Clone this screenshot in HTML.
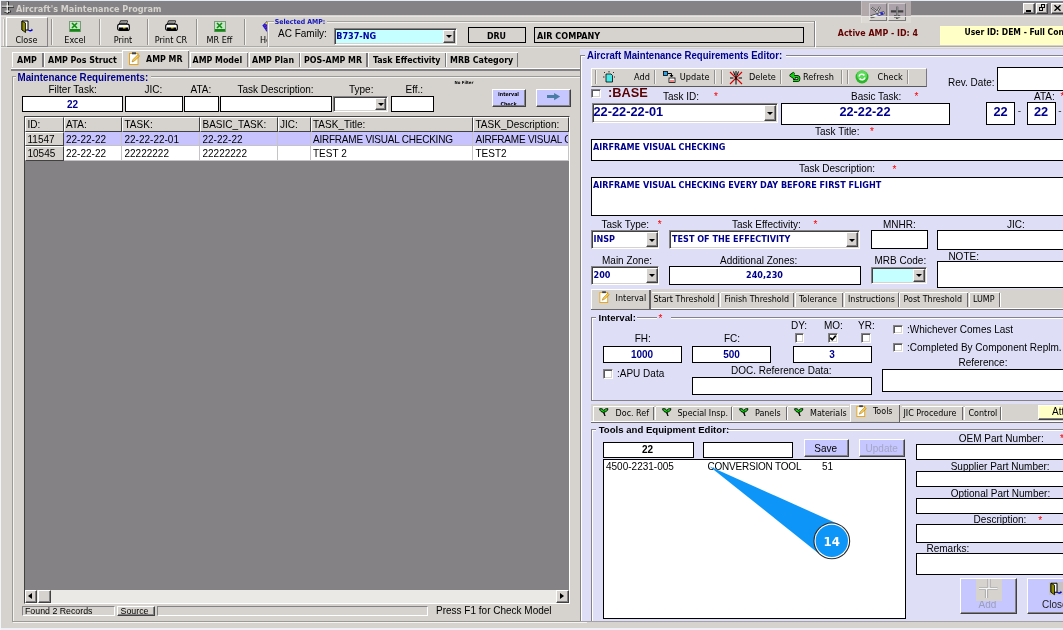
<!DOCTYPE html>
<html><head><meta charset="utf-8"><title>Aircraft's Maintenance Program</title>
<style>
html,body{margin:0;padding:0;}
body{width:1063px;height:630px;overflow:hidden;position:relative;background:#D6D3CE;font-family:"Liberation Sans",Arial,sans-serif;font-size:10px;}
.b{position:absolute;}
.t{position:absolute;white-space:nowrap;overflow:visible;}
#w{position:absolute;left:0;top:0;width:1063px;height:630px;overflow:hidden;will-change:transform;}
svg{display:block;overflow:visible}
.fa{font-family:"Liberation Sans",Arial,sans-serif}
.ft{font-family:"DejaVu Sans Condensed","DejaVu Sans","Liberation Sans",sans-serif}
</style></head><body><div id="w">
<div class="b " style="left:0px;top:0px;width:1063px;height:1.2px;background:#E3EBF7"></div>
<div class="b " style="left:0px;top:0px;width:1px;height:630px;background:#F3F5FB"></div>
<div class="b " style="left:1px;top:1.2px;width:1062px;height:14.3px;background:#848284"></div>
<svg class="b" style="left:1px;top:0.700px" width="14" height="13" viewBox="0 0 14 13"><path d="M6.600 0.500v12M1 5.500h12M3.300 10.500h6.400" stroke="#000" stroke-width="2.200" fill="none"/><path d="M6.200 0.700v11.200M0.800 5h11.800M3.300 10h5.800" stroke="#fff" stroke-width="1.250" fill="none"/></svg>
<div class="t ft" style="top:2.79px;font-size:9px;line-height:12px;height:12px;color:#D6D3CE;font-weight:bold;left:16px;">Aircraft&#x27;s Maintenance Program</div>
<div class="b " style="left:861.2px;top:1.2px;width:50.3px;height:14.8px;background:#B2A9AA"></div>
<div class="b " style="left:861.2px;top:16px;width:50.3px;height:6.7px;background:#DDDAD6"></div>
<div class="b " style="left:861.2px;top:1.2px;width:1.3px;height:21.5px;background:rgba(255,255,255,.25)"></div>
<div class="b " style="left:869px;top:2.8px;width:18.3px;height:13.2px;background:#ABA3A9"></div>
<div class="b " style="left:869px;top:16px;width:18.3px;height:5.1px;background:#D8D5D0"></div>
<div class="b " style="left:869px;top:2.8px;width:18.3px;height:18.3px;box-sizing:border-box;border:1px solid;border-color:rgba(255,255,255,.45) #7B797B #7B797B rgba(255,255,255,.45)"></div>
<div class="b " style="left:887.9px;top:2.8px;width:18.6px;height:13.2px;background:#ABA3A9"></div>
<div class="b " style="left:887.9px;top:16px;width:18.6px;height:5.1px;background:#D8D5D0"></div>
<div class="b " style="left:887.9px;top:2.8px;width:18.6px;height:18.3px;box-sizing:border-box;border:1px solid;border-color:rgba(255,255,255,.45) #7B797B #7B797B rgba(255,255,255,.45)"></div>
<svg class="b" style="left:870px;top:5px" width="16" height="14" viewBox="0 0 16 14"><path d="M1.500 2.500L8 7.500M10 2L6.500 8" stroke="#424142" stroke-width="2.200" fill="none"/><path d="M1.500 2.500L8 7.500M10 2L6.500 8" stroke="#E7E7E7" stroke-width="0.900" fill="none"/><path d="M2 11.500L13 8" stroke="#424142" stroke-width="3.400" stroke-linecap="round"/><path d="M2 11.500L13 8" stroke="#EFEFEF" stroke-width="1.800" stroke-linecap="round"/><circle cx="11.800" cy="8.600" r="1.500" fill="#2424E0"/><path d="M6 9l3 1" stroke="#5A5ADF" stroke-width="1"/></svg>
<svg class="b" style="left:889.5px;top:5.5px" width="14" height="14" viewBox="0 0 14 14"><path d="M7.100 0.700v12.300M0.900 5.400h12.400M4 10.300h6.200" stroke="#424142" stroke-width="2.200" fill="none"/><path d="M7.100 1v11.500" stroke="#EFEFEF" stroke-width="0.700" fill="none"/></svg>
<div class="b " style="left:1023px;top:2.5px;width:12px;height:11.0px;background:#D6D3CE;box-sizing:border-box;border:1px solid;border-color:#fff #424142 #424142 #fff;box-shadow:inset -1px -1px 0 #848284;"></div>
<div class="b " style="left:1036px;top:2.5px;width:12.4px;height:11.0px;background:#D6D3CE;box-sizing:border-box;border:1px solid;border-color:#fff #424142 #424142 #fff;box-shadow:inset -1px -1px 0 #848284;"></div>
<div class="b " style="left:1051px;top:2.5px;width:15px;height:11.0px;background:#D6D3CE;box-sizing:border-box;border:1px solid;border-color:#fff #424142 #424142 #fff;box-shadow:inset -1px -1px 0 #848284;"></div>
<div class="b" style="left:1026.2px;top:9.9px;width:4.8px;height:1.7px;background:#000"></div>
<div class="b" style="left:1040.8px;top:4.3px;width:4.2px;height:4.2px;border:1px solid #000;border-top-width:1.7px;box-sizing:border-box"></div>
<div class="b" style="left:1038.5px;top:7.1px;width:4.5px;height:4.4px;border:1px solid #000;border-top-width:1.7px;box-sizing:border-box;background:#D6D3CE"></div>
<svg class="b" style="left:1054px;top:5px" width="7" height="6" viewBox="0 0 7 6"><path d="M0.500 0.300l6 5.400M6.500 0.300l-6 5.400" stroke="#000" stroke-width="1.500"/></svg>
<div class="b " style="left:1px;top:15.5px;width:1062px;height:1.5px;background:#E7E5E1"></div>
<div class="b " style="left:1px;top:46.3px;width:1062px;height:1.0px;background:#ADABA8"></div>
<div class="b " style="left:1px;top:47.3px;width:1062px;height:1.0px;background:#E9E7E4"></div>
<div class="b " style="left:2.5px;top:18.5px;width:1.2px;height:27.0px;background:#F3F2F0"></div>
<div class="b " style="left:3.7px;top:18.5px;width:1.0px;height:27.0px;background:#B5B3B0"></div>
<div class="b " style="left:6px;top:17px;width:42px;height:29.5px;box-sizing:border-box;border:1px solid;border-color:#fff #848284 #848284 #fff"></div>
<div class="b " style="left:51px;top:19px;width:1px;height:26px;background:#94928F"></div>
<div class="b " style="left:52px;top:19px;width:1px;height:26px;background:#F3F2F0"></div>
<div class="b " style="left:99px;top:19px;width:1px;height:26px;background:#94928F"></div>
<div class="b " style="left:100px;top:19px;width:1px;height:26px;background:#F3F2F0"></div>
<div class="b " style="left:147px;top:19px;width:1px;height:26px;background:#94928F"></div>
<div class="b " style="left:148px;top:19px;width:1px;height:26px;background:#F3F2F0"></div>
<div class="b " style="left:196px;top:19px;width:1px;height:26px;background:#94928F"></div>
<div class="b " style="left:197px;top:19px;width:1px;height:26px;background:#F3F2F0"></div>
<div class="b " style="left:244px;top:19px;width:1px;height:26px;background:#94928F"></div>
<div class="b " style="left:245px;top:19px;width:1px;height:26px;background:#F3F2F0"></div>
<div class="t ft" style="top:33.79px;font-size:9px;line-height:12px;height:12px;color:#000;left:-3.5px;width:60px;text-align:center;">Close</div>
<div class="t ft" style="top:33.79px;font-size:9px;line-height:12px;height:12px;color:#000;left:45.0px;width:60px;text-align:center;">Excel</div>
<div class="t ft" style="top:33.79px;font-size:9px;line-height:12px;height:12px;color:#000;left:93.0px;width:60px;text-align:center;">Print</div>
<div class="t ft" style="top:33.79px;font-size:9px;line-height:12px;height:12px;color:#000;left:141.0px;width:60px;text-align:center;">Print CR</div>
<div class="t ft" style="top:33.79px;font-size:9px;line-height:12px;height:12px;color:#000;left:189.5px;width:60px;text-align:center;">MR Eff</div>
<svg class="b" style="left:21px;top:20px" width="13" height="13" viewBox="0 0 13 13"><path d="M1 1h6v9h-6z" fill="#fff" stroke="#000" stroke-width="1"/><path d="M1 1l3.5 2v9.5l-3.5-2.5z" fill="#8C8A00" stroke="#000" stroke-width="0.8"/><path d="M7 10.5c2 1.5 4 1 5-0.5l-1.5-1.5v1c-1 .8-2 .8-3.5 0z" fill="#0000C6"/></svg>
<svg class="b" style="left:69px;top:20.5px" width="12" height="11" viewBox="0 0 12 11"><rect x="0.5" y="0.5" width="11" height="10" fill="#C6E7C6" stroke="#7B9A7B"/><rect x="1" y="8" width="10" height="2.5" fill="#108A10"/><path d="M3 2l5 5M8 2l-5 5" stroke="#108A10" stroke-width="1.6"/></svg>
<svg class="b" style="left:213.5px;top:20.5px" width="12" height="11" viewBox="0 0 12 11"><rect x="0.5" y="0.5" width="11" height="10" fill="#C6E7C6" stroke="#7B9A7B"/><rect x="1" y="8" width="10" height="2.5" fill="#108A10"/><path d="M3 2l5 5M8 2l-5 5" stroke="#108A10" stroke-width="1.6"/></svg>
<svg class="b" style="left:116.5px;top:20px" width="13" height="12" viewBox="0 0 13 12"><path d="M3.5 0.8h7l-1 3.2h-7z" fill="#fff" stroke="#000" stroke-width="0.9"/><path d="M4 2h5M3.7 3h5" stroke="#000" stroke-width="0.5"/><rect x="0.7" y="4.2" width="11.6" height="6.3" rx="2" fill="#fff" stroke="#000" stroke-width="1.2"/><rect x="2" y="7.5" width="9" height="2.6" fill="#000"/><rect x="6" y="7.2" width="2.5" height="1.2" fill="#FFE700"/></svg>
<svg class="b" style="left:164.5px;top:20px" width="13" height="12" viewBox="0 0 13 12"><path d="M3.5 0.8h7l-1 3.2h-7z" fill="#fff" stroke="#000" stroke-width="0.9"/><path d="M4 2h5M3.7 3h5" stroke="#000" stroke-width="0.5"/><rect x="0.7" y="4.2" width="11.6" height="6.3" rx="2" fill="#fff" stroke="#000" stroke-width="1.2"/><rect x="2" y="7.5" width="9" height="2.6" fill="#000"/><rect x="6" y="7.2" width="2.5" height="1.2" fill="#FFE700"/></svg>
<div class="b" style="left:258px;top:30px;width:9px;height:16px;overflow:hidden">
<div class="t ft" style="top:3.79px;font-size:9px;line-height:12px;height:12px;color:#000;left:2px;">Help</div>
</div>
<svg class="b" style="left:262px;top:21px" width="5" height="11" viewBox="0 0 5 11"><path d="M5 0L0.300 4.500 5 11z" fill="#1818D6"/><path d="M5 3L1.800 5.200M5 5.500L2.500 7M5 8L3.500 9" stroke="#8C30C6" stroke-width="0.900"/><circle cx="4.300" cy="2.300" r="1" fill="#FFEF00"/></svg>
<div class="b " style="left:267px;top:21px;width:1px;height:26px;background:#A5A2A0"></div>
<div class="b " style="left:268px;top:21.5px;width:1px;height:25.5px;background:#F5F4F2"></div>
<div class="b " style="left:267px;top:20.5px;width:7px;height:1.0px;background:#A5A3A0"></div>
<div class="b " style="left:268px;top:21.5px;width:6px;height:1.0px;background:#F1F0EE"></div>
<div class="b " style="left:327px;top:20.5px;width:488px;height:1.0px;background:#A5A3A0"></div>
<div class="b " style="left:327px;top:21.5px;width:487px;height:1.0px;background:#F1F0EE"></div>
<div class="b " style="left:814px;top:21px;width:1px;height:26px;background:#848284"></div>
<div class="b " style="left:815px;top:21px;width:1px;height:27px;background:#fff"></div>
<div class="t ft" style="top:16.91px;font-size:6.9px;line-height:10px;height:10px;color:#1414B8;font-weight:bold;left:274.8px;">Selected AMP:</div>
<div class="t fa" style="top:27.04px;font-size:10px;line-height:13px;height:13px;color:#000;transform:scaleY(1.07);transform-origin:0 9.96px;left:278px;">AC Family:</div>
<div class="b " style="left:334px;top:27.5px;width:123px;height:17.5px;background:#C6FFFF;box-sizing:border-box;border:1px solid;border-color:#848284 #fff #fff #848284;box-shadow:inset 1px 1px 0 #424142, inset -1px -1px 0 #D6D3CE;"></div>
<div class="b " style="left:443px;top:29.5px;width:12px;height:13.5px;background:#D6D3CE;box-sizing:border-box;border:1px solid;border-color:#fff #424142 #424142 #fff;box-shadow:inset -1px -1px 0 #848284;"></div>
<div class="b" style="left:446.0px;top:35.25px;width:0;height:0;border-left:3px solid transparent;border-right:3px solid transparent;border-top:3px solid #000"></div>
<div class="t ft" style="top:30.29px;font-size:9px;line-height:12px;height:12px;color:#0000A5;font-weight:bold;left:336.3px;">B737-NG</div>
<div class="b " style="left:468px;top:27px;width:58px;height:16px;background:#D6D3CE;border:1px solid #000;box-sizing:border-box;"></div>
<div class="t ft" style="top:29.66px;font-size:8.8px;line-height:12px;height:12px;color:#000;font-weight:bold;left:471.5px;width:50px;text-align:center;">DRU</div>
<div class="b " style="left:534px;top:27px;width:270px;height:16px;background:#D6D3CE;border:1px solid #000;box-sizing:border-box;"></div>
<div class="t ft" style="top:29.89px;font-size:9px;line-height:12px;height:12px;color:#000;font-weight:bold;left:537px;">AIR COMPANY</div>
<div class="t ft" style="top:26.56px;font-size:8.8px;line-height:12px;height:12px;color:#630000;font-weight:bold;left:837.8px;">Active AMP - ID: 4</div>
<div class="b " style="left:940.2px;top:26.3px;width:122.8px;height:18.4px;background:#FFFFC6"></div>
<div class="t ft" style="top:26.36px;font-size:8.5px;line-height:12px;height:12px;color:#000;font-weight:bold;left:964.5px;">User ID: DEM - Full Control</div>
<div class="t ft" style="top:53.96px;font-size:8.8px;line-height:12px;height:12px;color:#000;font-weight:bold;left:17px;">AMP</div>
<div class="t ft" style="top:53.96px;font-size:8.8px;line-height:12px;height:12px;color:#000;font-weight:bold;left:48px;">AMP Pos Struct</div>
<div class="t ft" style="top:53.96px;font-size:8.8px;line-height:12px;height:12px;color:#000;font-weight:bold;left:192.5px;">AMP Model</div>
<div class="t ft" style="top:53.96px;font-size:8.8px;line-height:12px;height:12px;color:#000;font-weight:bold;left:252px;">AMP Plan</div>
<div class="t ft" style="top:53.96px;font-size:8.8px;line-height:12px;height:12px;color:#000;font-weight:bold;left:304px;">POS-AMP MR</div>
<div class="t ft" style="top:53.96px;font-size:8.8px;line-height:12px;height:12px;color:#000;font-weight:bold;left:373px;">Task Effectivity</div>
<div class="t ft" style="top:53.96px;font-size:8.8px;line-height:12px;height:12px;color:#000;font-weight:bold;left:450px;">MRB Category</div>
<div class="b " style="left:12px;top:52px;width:31.6px;height:1px;background:#fff"></div>
<div class="b " style="left:12px;top:52px;width:1px;height:15px;background:#fff"></div>
<div class="b " style="left:42.300000000000004px;top:53px;width:1.3px;height:14px;background:#7B797B"></div>
<div class="b " style="left:43.8px;top:52px;width:78.2px;height:1px;background:#fff"></div>
<div class="b " style="left:43.8px;top:52px;width:1.0px;height:15px;background:#fff"></div>
<div class="b " style="left:190px;top:52px;width:58.3px;height:1px;background:#fff"></div>
<div class="b " style="left:190px;top:52px;width:1px;height:15px;background:#fff"></div>
<div class="b " style="left:247.0px;top:53px;width:1.3px;height:14px;background:#7B797B"></div>
<div class="b " style="left:248.5px;top:52px;width:51.3px;height:1px;background:#fff"></div>
<div class="b " style="left:248.5px;top:52px;width:1.0px;height:15px;background:#fff"></div>
<div class="b " style="left:298.5px;top:53px;width:1.3px;height:14px;background:#7B797B"></div>
<div class="b " style="left:300px;top:52px;width:67.6px;height:1px;background:#fff"></div>
<div class="b " style="left:300px;top:52px;width:1px;height:15px;background:#fff"></div>
<div class="b " style="left:366.3px;top:53px;width:1.3px;height:14px;background:#7B797B"></div>
<div class="b " style="left:367.8px;top:52px;width:78.2px;height:1px;background:#fff"></div>
<div class="b " style="left:367.8px;top:52px;width:1.0px;height:15px;background:#fff"></div>
<div class="b " style="left:444.7px;top:53px;width:1.3px;height:14px;background:#7B797B"></div>
<div class="b " style="left:446.2px;top:52px;width:72.2px;height:1px;background:#fff"></div>
<div class="b " style="left:446.2px;top:52px;width:1.0px;height:15px;background:#fff"></div>
<div class="b " style="left:517.1px;top:53px;width:1.3px;height:14px;background:#7B797B"></div>
<div class="b " style="left:11px;top:68px;width:569px;height:1px;background:#fff"></div>
<div class="b " style="left:11px;top:69.4px;width:569px;height:1.3px;background:#848284"></div>
<div class="b " style="left:1px;top:628px;width:1062px;height:2px;background:#EFEFF7"></div>
<div class="b " style="left:123px;top:50px;width:66px;height:19px;background:#D6D3CE"></div>
<div class="b " style="left:122px;top:50.3px;width:67.3px;height:1.0px;background:#fff"></div>
<div class="b " style="left:122px;top:50.3px;width:1px;height:17.7px;background:#fff"></div>
<div class="b " style="left:188.0px;top:51.3px;width:1.3px;height:16.7px;background:#7B797B"></div>
<svg class="b" style="left:129px;top:52px" width="11" height="13" viewBox="0 0 11 13"><rect x="0.5" y="1.5" width="8.5" height="11" fill="#fff" stroke="#E7A218" stroke-width="1"/><rect x="3" y="0.3" width="4" height="2" fill="#424142"/><path d="M3 10l1-2.5 5-5 1.5 1.5-5 5z" fill="#F7CB4A" stroke="#9C6500" stroke-width="0.5"/></svg>
<div class="t ft" style="top:52.76px;font-size:8.8px;line-height:12px;height:12px;color:#000;font-weight:bold;left:146px;">AMP MR</div>
<div class="b " style="left:12px;top:76px;width:574px;height:545.8px;box-sizing:border-box;border:1px solid #9C9A97;box-shadow:inset 1px 1px 0 #F5F4F2, 1px 1px 0 #F5F4F2;"></div>
<div class="b " style="left:15.5px;top:75px;width:135.0px;height:4px;background:#D6D3CE"></div>
<div class="t fa" style="top:70.60px;font-size:9.8px;line-height:13px;height:13px;color:#00008C;transform:scaleY(1.07);transform-origin:0 9.90px;font-weight:bold;left:17.5px;">Maintenance Requirements:</div>
<div class="t fa" style="top:83.03px;font-size:10px;line-height:13px;height:13px;color:#000;transform:scaleY(1.07);transform-origin:0 9.96px;left:48.5px;">Filter Task:</div>
<div class="t fa" style="top:83.03px;font-size:10px;line-height:13px;height:13px;color:#000;transform:scaleY(1.07);transform-origin:0 9.96px;left:144.5px;">JIC:</div>
<div class="t fa" style="top:83.03px;font-size:10px;line-height:13px;height:13px;color:#000;transform:scaleY(1.07);transform-origin:0 9.96px;left:190.5px;">ATA:</div>
<div class="t fa" style="top:83.03px;font-size:10px;line-height:13px;height:13px;color:#000;transform:scaleY(1.07);transform-origin:0 9.96px;left:237.5px;">Task Description:</div>
<div class="t fa" style="top:83.03px;font-size:10px;line-height:13px;height:13px;color:#000;transform:scaleY(1.07);transform-origin:0 9.96px;left:349px;">Type:</div>
<div class="t fa" style="top:83.03px;font-size:10px;line-height:13px;height:13px;color:#000;transform:scaleY(1.07);transform-origin:0 9.96px;left:405.5px;">Eff.:</div>
<div class="b " style="left:22px;top:96.2px;width:101px;height:16.0px;background:#fff;border:1px solid #000;box-sizing:border-box;"></div>
<div class="t fa" style="top:98.23px;font-size:10px;line-height:13px;height:13px;color:#00008C;transform:scaleY(1.07);transform-origin:50% 9.96px;font-weight:bold;left:52.5px;width:40px;text-align:center;">22</div>
<div class="b " style="left:125px;top:96.2px;width:58px;height:16.0px;background:#fff;border:1px solid #000;box-sizing:border-box;"></div>
<div class="b " style="left:184px;top:96.2px;width:35px;height:16.0px;background:#fff;border:1px solid #000;box-sizing:border-box;"></div>
<div class="b " style="left:220px;top:96.2px;width:112px;height:16.0px;background:#fff;border:1px solid #000;box-sizing:border-box;"></div>
<div class="b " style="left:333px;top:96.2px;width:55.3px;height:16.0px;background:#fff;box-sizing:border-box;border:1px solid;border-color:#848284 #fff #fff #848284;box-shadow:inset 1px 1px 0 #424142, inset -1px -1px 0 #D6D3CE;"></div>
<div class="b " style="left:374.8px;top:98.2px;width:11.5px;height:12.0px;background:#D6D3CE;box-sizing:border-box;border:1px solid;border-color:#fff #424142 #424142 #fff;box-shadow:inset -1px -1px 0 #848284;"></div>
<div class="b" style="left:377.55px;top:103.2px;width:0;height:0;border-left:3px solid transparent;border-right:3px solid transparent;border-top:3px solid #000"></div>
<div class="b " style="left:391px;top:96.2px;width:43px;height:16.0px;background:#fff;border:1px solid #000;box-sizing:border-box;"></div>
<div class="t ft" style="top:79.31px;font-size:4.3px;line-height:7px;height:7px;color:#000;font-weight:bold;left:454.5px;">No Filter</div>
<div class="b " style="left:491.5px;top:88.5px;width:34.2px;height:18.5px;background:#C6C7FF;box-sizing:border-box;border:1px solid;border-color:#fff #424142 #424142 #fff;box-shadow:inset -1px -1px 0 #848284;"></div>
<div class="b " style="left:536px;top:88.5px;width:34.5px;height:18.5px;background:#C6C7FF;box-sizing:border-box;border:1px solid;border-color:#fff #424142 #424142 #fff;box-shadow:inset -1px -1px 0 #848284;"></div>
<div class="t ft" style="top:89.77px;font-size:5.3px;line-height:8px;height:8px;color:#000;font-weight:bold;left:488.5px;width:40px;text-align:center;">Interval</div>
<div class="t ft" style="top:99.97px;font-size:5.3px;line-height:8px;height:8px;color:#000;font-weight:bold;left:488.5px;width:40px;text-align:center;clip-path:inset(0 0 2.6px 0);">Check</div>
<svg class="b" style="left:546.5px;top:92.5px" width="13.2" height="7.2" viewBox="0 0 13 7"><path d="M0 2h7V0L13 3.5 7 7V5H0z" fill="#4A7DA5"/></svg>
<div class="b " style="left:24px;top:116px;width:546px;height:488px;background:#848284;border:1px solid;border-color:#424142 #fff #fff #424142;box-sizing:border-box"></div>
<div class="b " style="left:25px;top:117px;width:38.5px;height:14.5px;background:#D6D3CE;box-sizing:border-box;border:1px solid;border-color:#fff #424142 #424142 #fff;overflow:hidden"></div>
<div class="t fa" style="top:117.53px;font-size:10px;line-height:13px;height:13px;color:#000;transform:scaleY(1.07);transform-origin:0 9.96px;left:27.5px;">ID:</div>
<div class="b " style="left:63.5px;top:117px;width:58.5px;height:14.5px;background:#D6D3CE;box-sizing:border-box;border:1px solid;border-color:#fff #424142 #424142 #fff;overflow:hidden"></div>
<div class="t fa" style="top:117.53px;font-size:10px;line-height:13px;height:13px;color:#000;transform:scaleY(1.07);transform-origin:0 9.96px;left:66.0px;">ATA:</div>
<div class="b " style="left:122px;top:117px;width:78px;height:14.5px;background:#D6D3CE;box-sizing:border-box;border:1px solid;border-color:#fff #424142 #424142 #fff;overflow:hidden"></div>
<div class="t fa" style="top:117.53px;font-size:10px;line-height:13px;height:13px;color:#000;transform:scaleY(1.07);transform-origin:0 9.96px;left:124.5px;">TASK:</div>
<div class="b " style="left:200px;top:117px;width:77.5px;height:14.5px;background:#D6D3CE;box-sizing:border-box;border:1px solid;border-color:#fff #424142 #424142 #fff;overflow:hidden"></div>
<div class="t fa" style="top:117.53px;font-size:10px;line-height:13px;height:13px;color:#000;transform:scaleY(1.07);transform-origin:0 9.96px;left:202.5px;">BASIC_TASK:</div>
<div class="b " style="left:277.5px;top:117px;width:33.0px;height:14.5px;background:#D6D3CE;box-sizing:border-box;border:1px solid;border-color:#fff #424142 #424142 #fff;overflow:hidden"></div>
<div class="t fa" style="top:117.53px;font-size:10px;line-height:13px;height:13px;color:#000;transform:scaleY(1.07);transform-origin:0 9.96px;left:280.0px;">JIC:</div>
<div class="b " style="left:310.5px;top:117px;width:162.5px;height:14.5px;background:#D6D3CE;box-sizing:border-box;border:1px solid;border-color:#fff #424142 #424142 #fff;overflow:hidden"></div>
<div class="t fa" style="top:117.53px;font-size:10px;line-height:13px;height:13px;color:#000;transform:scaleY(1.07);transform-origin:0 9.96px;left:313.0px;">TASK_Title:</div>
<div class="b " style="left:473px;top:117px;width:96px;height:14.5px;background:#D6D3CE;box-sizing:border-box;border:1px solid;border-color:#fff #424142 #424142 #fff;overflow:hidden"></div>
<div class="t fa" style="top:117.53px;font-size:10px;line-height:13px;height:13px;color:#000;transform:scaleY(1.07);transform-origin:0 9.96px;left:475.5px;">TASK_Description:</div>
<div class="b " style="left:25px;top:131.5px;width:38.5px;height:14.5px;background:#D6D3CE;box-sizing:border-box;border:1px solid;border-color:#fff #424142 #424142 #fff;"></div>
<div class="b" style="left:25px;top:131.5px;width:37.5px;height:14.5px;overflow:hidden">
<div class="t fa" style="top:1.04px;font-size:10px;line-height:13px;height:13px;color:#000;transform:scaleY(1.07);transform-origin:0 9.96px;left:2.5px;">11547</div>
</div>
<div class="b " style="left:63.5px;top:131.5px;width:58.5px;height:14.5px;background:#C6C3FF;box-sizing:border-box;border-right:1px solid #C6C3C6;border-bottom:1px solid #C6C3C6;overflow:hidden"></div>
<div class="b" style="left:63.5px;top:131.5px;width:57.5px;height:14.5px;overflow:hidden">
<div class="t fa" style="top:1.04px;font-size:10px;line-height:13px;height:13px;color:#000;transform:scaleY(1.07);transform-origin:0 9.96px;left:2.5px;">22-22-22</div>
</div>
<div class="b " style="left:122px;top:131.5px;width:78px;height:14.5px;background:#C6C3FF;box-sizing:border-box;border-right:1px solid #C6C3C6;border-bottom:1px solid #C6C3C6;overflow:hidden"></div>
<div class="b" style="left:122px;top:131.5px;width:77px;height:14.5px;overflow:hidden">
<div class="t fa" style="top:1.04px;font-size:10px;line-height:13px;height:13px;color:#000;transform:scaleY(1.07);transform-origin:0 9.96px;left:2.5px;">22-22-22-01</div>
</div>
<div class="b " style="left:200px;top:131.5px;width:77.5px;height:14.5px;background:#C6C3FF;box-sizing:border-box;border-right:1px solid #C6C3C6;border-bottom:1px solid #C6C3C6;overflow:hidden"></div>
<div class="b" style="left:200px;top:131.5px;width:76.5px;height:14.5px;overflow:hidden">
<div class="t fa" style="top:1.04px;font-size:10px;line-height:13px;height:13px;color:#000;transform:scaleY(1.07);transform-origin:0 9.96px;left:2.5px;">22-22-22</div>
</div>
<div class="b " style="left:277.5px;top:131.5px;width:33.0px;height:14.5px;background:#C6C3FF;box-sizing:border-box;border-right:1px solid #C6C3C6;border-bottom:1px solid #C6C3C6;overflow:hidden"></div>
<div class="b" style="left:277.5px;top:131.5px;width:32.0px;height:14.5px;overflow:hidden">
<div class="t fa" style="top:1.04px;font-size:10px;line-height:13px;height:13px;color:#000;transform:scaleY(1.07);transform-origin:0 9.96px;left:2.5px;"></div>
</div>
<div class="b " style="left:310.5px;top:131.5px;width:162.5px;height:14.5px;background:#C6C3FF;box-sizing:border-box;border-right:1px solid #C6C3C6;border-bottom:1px solid #C6C3C6;overflow:hidden"></div>
<div class="b" style="left:310.5px;top:131.5px;width:161.5px;height:14.5px;overflow:hidden">
<div class="t fa" style="top:1.04px;font-size:10px;line-height:13px;height:13px;color:#000;transform:scaleY(1.07);transform-origin:0 9.96px;letter-spacing:-0.23px;left:2.5px;">AIRFRAME VISUAL CHECKING</div>
</div>
<div class="b " style="left:473px;top:131.5px;width:96px;height:14.5px;background:#C6C3FF;box-sizing:border-box;border-right:1px solid #C6C3C6;border-bottom:1px solid #C6C3C6;overflow:hidden"></div>
<div class="b" style="left:473px;top:131.5px;width:95px;height:14.5px;overflow:hidden">
<div class="t fa" style="top:1.04px;font-size:10px;line-height:13px;height:13px;color:#000;transform:scaleY(1.07);transform-origin:0 9.96px;letter-spacing:-0.23px;left:2.5px;">AIRFRAME VISUAL C</div>
</div>
<div class="b " style="left:25px;top:146.0px;width:38.5px;height:14.5px;background:#D6D3CE;box-sizing:border-box;border:1px solid;border-color:#fff #424142 #424142 #fff;"></div>
<div class="b" style="left:25px;top:146.0px;width:37.5px;height:14.5px;overflow:hidden">
<div class="t fa" style="top:1.04px;font-size:10px;line-height:13px;height:13px;color:#000;transform:scaleY(1.07);transform-origin:0 9.96px;left:2.5px;">10545</div>
</div>
<div class="b " style="left:63.5px;top:146.0px;width:58.5px;height:14.5px;background:#fff;box-sizing:border-box;border-right:1px solid #C6C3C6;border-bottom:1px solid #C6C3C6;overflow:hidden"></div>
<div class="b" style="left:63.5px;top:146.0px;width:57.5px;height:14.5px;overflow:hidden">
<div class="t fa" style="top:1.04px;font-size:10px;line-height:13px;height:13px;color:#000;transform:scaleY(1.07);transform-origin:0 9.96px;left:2.5px;">22-22-22</div>
</div>
<div class="b " style="left:122px;top:146.0px;width:78px;height:14.5px;background:#fff;box-sizing:border-box;border-right:1px solid #C6C3C6;border-bottom:1px solid #C6C3C6;overflow:hidden"></div>
<div class="b" style="left:122px;top:146.0px;width:77px;height:14.5px;overflow:hidden">
<div class="t fa" style="top:1.04px;font-size:10px;line-height:13px;height:13px;color:#000;transform:scaleY(1.07);transform-origin:0 9.96px;left:2.5px;">22222222</div>
</div>
<div class="b " style="left:200px;top:146.0px;width:77.5px;height:14.5px;background:#fff;box-sizing:border-box;border-right:1px solid #C6C3C6;border-bottom:1px solid #C6C3C6;overflow:hidden"></div>
<div class="b" style="left:200px;top:146.0px;width:76.5px;height:14.5px;overflow:hidden">
<div class="t fa" style="top:1.04px;font-size:10px;line-height:13px;height:13px;color:#000;transform:scaleY(1.07);transform-origin:0 9.96px;left:2.5px;">22222222</div>
</div>
<div class="b " style="left:277.5px;top:146.0px;width:33.0px;height:14.5px;background:#fff;box-sizing:border-box;border-right:1px solid #C6C3C6;border-bottom:1px solid #C6C3C6;overflow:hidden"></div>
<div class="b" style="left:277.5px;top:146.0px;width:32.0px;height:14.5px;overflow:hidden">
<div class="t fa" style="top:1.04px;font-size:10px;line-height:13px;height:13px;color:#000;transform:scaleY(1.07);transform-origin:0 9.96px;left:2.5px;"></div>
</div>
<div class="b " style="left:310.5px;top:146.0px;width:162.5px;height:14.5px;background:#fff;box-sizing:border-box;border-right:1px solid #C6C3C6;border-bottom:1px solid #C6C3C6;overflow:hidden"></div>
<div class="b" style="left:310.5px;top:146.0px;width:161.5px;height:14.5px;overflow:hidden">
<div class="t fa" style="top:1.04px;font-size:10px;line-height:13px;height:13px;color:#000;transform:scaleY(1.07);transform-origin:0 9.96px;left:2.5px;">TEST 2</div>
</div>
<div class="b " style="left:473px;top:146.0px;width:96px;height:14.5px;background:#fff;box-sizing:border-box;border-right:1px solid #C6C3C6;border-bottom:1px solid #C6C3C6;overflow:hidden"></div>
<div class="b" style="left:473px;top:146.0px;width:95px;height:14.5px;overflow:hidden">
<div class="t fa" style="top:1.04px;font-size:10px;line-height:13px;height:13px;color:#000;transform:scaleY(1.07);transform-origin:0 9.96px;left:2.5px;">TEST2</div>
</div>
<div class="b " style="left:25px;top:590px;width:544px;height:13px;background:#EBE9E6"></div>
<div class="b " style="left:25px;top:590px;width:12px;height:12.5px;background:#D6D3CE;box-sizing:border-box;border:1px solid;border-color:#fff #424142 #424142 #fff;box-shadow:inset -1px -1px 0 #848284;"></div>
<div class="b " style="left:37.5px;top:590px;width:13.0px;height:12.5px;background:#D6D3CE;box-sizing:border-box;border:1px solid;border-color:#fff #424142 #424142 #fff;box-shadow:inset -1px -1px 0 #848284;"></div>
<div class="b " style="left:555.5px;top:590px;width:13.0px;height:12.5px;background:#D6D3CE;box-sizing:border-box;border:1px solid;border-color:#fff #424142 #424142 #fff;box-shadow:inset -1px -1px 0 #848284;"></div>
<div class="b" style="left:28px;top:593px;width:0;height:0;border-top:3px solid transparent;border-bottom:3px solid transparent;border-right:4px solid #000"></div>
<div class="b" style="left:560px;top:593px;width:0;height:0;border-top:3px solid transparent;border-bottom:3px solid transparent;border-left:4px solid #000"></div>
<div class="b " style="left:22px;top:606px;width:93px;height:9.5px;box-sizing:border-box;border:1px solid;border-color:#848284 #fff #fff #848284"></div>
<div class="t fa" style="top:604.85px;font-size:8.8px;line-height:12px;height:12px;color:#000;left:25px;">Found 2 Records</div>
<div class="b " style="left:117px;top:606px;width:38px;height:9.5px;background:#D6D3CE;box-sizing:border-box;border:1px solid;border-color:#fff #424142 #424142 #fff;box-shadow:inset -1px -1px 0 #848284;"></div>
<div class="t fa" style="top:604.85px;font-size:8.8px;line-height:12px;height:12px;color:#000;left:114.5px;width:40px;text-align:center;">Source</div>
<div class="b " style="left:156.5px;top:606px;width:271.5px;height:9.5px;box-sizing:border-box;border:1px solid;border-color:#848284 #fff #fff #848284"></div>
<div class="t fa" style="top:603.53px;font-size:10px;line-height:13px;height:13px;color:#000;transform:scaleY(1.07);transform-origin:0 9.96px;left:436px;">Press F1 for Check Model</div>
<div class="b " style="left:580.3px;top:48.6px;width:482.7px;height:572.4px;background:#DEDFF7"></div>
<div class="b " style="left:580px;top:621px;width:483px;height:1px;background:#A5A2A5"></div>
<div class="b " style="left:580.3px;top:55px;width:499.7px;height:566px;box-sizing:border-box;border:1px solid #848284;border-bottom:none;box-shadow:inset 1px 1px 0 #fff;"></div>
<div class="b " style="left:585px;top:53px;width:201px;height:6px;background:#DEDFF7"></div>
<div class="t fa" style="top:49.17px;font-size:9.6px;line-height:13px;height:13px;color:#00008C;transform:scaleY(1.07);transform-origin:0 9.83px;font-weight:bold;left:587px;">Aircraft Maintenance Requirements Editor:</div>
<div class="b " style="left:591.2px;top:67.8px;width:335.8px;height:19.2px;background:#D6D3CE;box-sizing:border-box;border:1px solid;border-color:#fff #7B797B #5A595A #fff"></div>
<div class="b " style="left:595px;top:70px;width:1px;height:14px;background:#94928F"></div>
<div class="b " style="left:596px;top:70px;width:1px;height:14px;background:#F3F2F0"></div>
<div class="b " style="left:654px;top:70px;width:1px;height:14px;background:#94928F"></div>
<div class="b " style="left:655px;top:70px;width:1px;height:14px;background:#F3F2F0"></div>
<div class="b " style="left:714px;top:70px;width:1px;height:14px;background:#94928F"></div>
<div class="b " style="left:715px;top:70px;width:1px;height:14px;background:#F3F2F0"></div>
<div class="b " style="left:721px;top:70px;width:1px;height:14px;background:#94928F"></div>
<div class="b " style="left:722px;top:70px;width:1px;height:14px;background:#F3F2F0"></div>
<div class="b " style="left:780px;top:70px;width:1px;height:14px;background:#94928F"></div>
<div class="b " style="left:781px;top:70px;width:1px;height:14px;background:#F3F2F0"></div>
<div class="b " style="left:841px;top:70px;width:1px;height:14px;background:#94928F"></div>
<div class="b " style="left:842px;top:70px;width:1px;height:14px;background:#F3F2F0"></div>
<div class="b " style="left:847px;top:70px;width:1px;height:14px;background:#94928F"></div>
<div class="b " style="left:848px;top:70px;width:1px;height:14px;background:#F3F2F0"></div>
<div class="b " style="left:907px;top:70px;width:1px;height:14px;background:#94928F"></div>
<div class="b " style="left:908px;top:70px;width:1px;height:14px;background:#F3F2F0"></div>
<div class="t ft" style="top:71.05px;font-size:9.1px;line-height:12px;height:12px;color:#000;left:634px;">Add</div>
<div class="t ft" style="top:71.05px;font-size:9.1px;line-height:12px;height:12px;color:#000;left:679.8px;">Update</div>
<div class="t ft" style="top:71.05px;font-size:9.1px;line-height:12px;height:12px;color:#000;left:749px;">Delete</div>
<div class="t ft" style="top:71.05px;font-size:9.1px;line-height:12px;height:12px;color:#000;left:803px;">Refresh</div>
<div class="t ft" style="top:71.05px;font-size:9.1px;line-height:12px;height:12px;color:#000;left:877.5px;">Check</div>
<svg class="b" style="left:603px;top:71px" width="12" height="12" viewBox="0 0 12 12"><path d="M3 3h5l1.5 1.5V11H3z" fill="#4AE7E7" stroke="#000" stroke-width="0.8"/><path d="M1 1l1 1M6 0v1.5M11 1l-1 1M0 6h1.5M11 6h1" stroke="#000" stroke-width="0.8"/></svg>
<svg class="b" style="left:663px;top:71px" width="13" height="12" viewBox="0 0 13 12"><rect x="0.5" y="0.5" width="4" height="4" fill="#29A2E7" stroke="#000" stroke-width="0.8"/><rect x="6" y="7" width="6" height="4.5" fill="#fff" stroke="#000" stroke-width="0.8"/><path d="M5 2.5h3.5v3M7 4l1.5 2L10 4" stroke="#000" stroke-width="1" fill="none"/><path d="M7 10h4" stroke="#E71010" stroke-width="1"/></svg>
<svg class="b" style="left:729px;top:70.500px" width="14" height="14" viewBox="0 0 14 14"><path d="M1 1l12 12M13 1L1 13" stroke="#D60000" stroke-width="1.100"/><path d="M7 0v13.500M4.500 0.500l1.500 4M9.500 0.500l-1.500 4" stroke="#000" stroke-width="1" fill="none"/><path d="M1 7h3.500M9.500 7H13" stroke="#000" stroke-width="1.100"/><rect x="6" y="5.500" width="2" height="3" fill="#000"/></svg>
<svg class="b" style="left:789.800px;top:71.800px" width="10.500" height="10.500" viewBox="0 0 10.500 10.500"><path d="M4.300 0.800L0.800 3.400l3.500 2.600V4.300H6.800a2.200 2.200 0 0 1 0 4.400H3" fill="none" stroke="#000" stroke-width="2.700" stroke-linejoin="round"/><path d="M4.300 0.800L0.800 3.400l3.500 2.600V4.300H6.800a2.200 2.200 0 0 1 0 4.400H3" fill="none" stroke="#10D810" stroke-width="1.300"/><path d="M4.200 1.400L1.500 3.400l2.700 2z" fill="#10D810"/></svg>
<svg class="b" style="left:855px;top:70px" width="14" height="14" viewBox="0 0 14 14"><circle cx="7" cy="7" r="6.5" fill="#29B629"/><circle cx="7" cy="5.500" r="5" fill="#5ADB5A"/><path d="M4 6.500a3 3 0 0 1 5-1.500M10 7.500a3 3 0 0 1-5 1.500" stroke="#fff" stroke-width="1.400" fill="none"/><path d="M8.300 3.500l2 1.800-2.500.5zM5.700 10.500l-2-1.800 2.500-.5z" fill="#fff"/></svg>
<div class="t fa" style="top:76.23px;font-size:10px;line-height:13px;height:13px;color:#000;transform:scaleY(1.07);transform-origin:0 9.96px;left:948px;">Rev. Date:</div>
<div class="b " style="left:996.5px;top:67.3px;width:83.5px;height:23.7px;background:#fff;border:1px solid #000;box-sizing:border-box;"></div>
<div class="b " style="left:591.3px;top:88.8px;width:9.9px;height:9.7px;background:#fff;box-sizing:border-box;border:1px solid;border-color:#848284 #fff #fff #848284;box-shadow:inset 1px 1px 0 #5A595A, inset -1px -1px 0 #D6D3CE;"></div>
<div class="t fa" style="top:84.86px;font-size:12.8px;line-height:16px;height:16px;color:#5A0000;font-weight:bold;left:608px;">:BASE</div>
<div class="t fa" style="top:89.53px;font-size:10px;line-height:13px;height:13px;color:#000;transform:scaleY(1.07);transform-origin:0 9.96px;left:663px;">Task ID:</div>
<div class="t fa" style="top:90.03px;font-size:10px;line-height:13px;height:13px;color:#F00;transform:scaleY(1.07);transform-origin:0 9.96px;left:714px;">*</div>
<div class="t fa" style="top:89.53px;font-size:10px;line-height:13px;height:13px;color:#000;transform:scaleY(1.07);transform-origin:0 9.96px;left:851px;">Basic Task:</div>
<div class="t fa" style="top:90.03px;font-size:10px;line-height:13px;height:13px;color:#F00;transform:scaleY(1.07);transform-origin:0 9.96px;left:914.5px;">*</div>
<div class="t fa" style="top:89.73px;font-size:10px;line-height:13px;height:13px;color:#000;transform:scaleY(1.07);transform-origin:0 9.96px;left:1034px;">ATA:</div>
<div class="t fa" style="top:90.03px;font-size:10px;line-height:13px;height:13px;color:#F00;transform:scaleY(1.07);transform-origin:0 9.96px;left:1060.5px;">*</div>
<div class="b " style="left:591.5px;top:102.7px;width:186.5px;height:20.6px;background:#fff;box-sizing:border-box;border:1px solid;border-color:#848284 #fff #fff #848284;box-shadow:inset 1px 1px 0 #424142, inset -1px -1px 0 #D6D3CE;"></div>
<div class="b " style="left:764px;top:104.7px;width:12px;height:16.6px;background:#D6D3CE;box-sizing:border-box;border:1px solid;border-color:#fff #424142 #424142 #fff;box-shadow:inset -1px -1px 0 #848284;"></div>
<div class="b" style="left:767.0px;top:112.0px;width:0;height:0;border-left:3px solid transparent;border-right:3px solid transparent;border-top:3px solid #000"></div>
<div class="t fa" style="top:104.06px;font-size:12.8px;line-height:16px;height:16px;color:#00008C;font-weight:bold;left:593.5px;">22-22-22-01</div>
<div class="b " style="left:781px;top:102.8px;width:169px;height:22.2px;background:#fff;border:1px solid #000;box-sizing:border-box;"></div>
<div class="t fa" style="top:104.06px;font-size:12.8px;line-height:16px;height:16px;color:#00008C;font-weight:bold;left:815.0px;width:100px;text-align:center;">22-22-22</div>
<div class="b " style="left:986px;top:102.3px;width:29px;height:22.7px;background:#fff;border:1px solid #000;box-sizing:border-box;"></div>
<div class="t fa" style="top:104.06px;font-size:12.8px;line-height:16px;height:16px;color:#00008C;font-weight:bold;left:985.5px;width:30px;text-align:center;">22</div>
<div class="b " style="left:1026.5px;top:102.3px;width:29.5px;height:22.7px;background:#fff;border:1px solid #000;box-sizing:border-box;"></div>
<div class="t fa" style="top:104.06px;font-size:12.8px;line-height:16px;height:16px;color:#00008C;font-weight:bold;left:1026.0px;width:30px;text-align:center;">22</div>
<div class="t fa" style="top:104.03px;font-size:10px;line-height:13px;height:13px;color:#333;transform:scaleY(1.07);transform-origin:0 9.96px;left:1017.8px;">-</div>
<div class="t fa" style="top:104.03px;font-size:10px;line-height:13px;height:13px;color:#333;transform:scaleY(1.07);transform-origin:0 9.96px;left:1058.3px;">-</div>
<div class="t fa" style="top:124.53px;font-size:10px;line-height:13px;height:13px;color:#000;transform:scaleY(1.07);transform-origin:0 9.96px;left:815px;">Task Title:</div>
<div class="t fa" style="top:125.03px;font-size:10px;line-height:13px;height:13px;color:#F00;transform:scaleY(1.07);transform-origin:0 9.96px;left:870px;">*</div>
<div class="b " style="left:591.2px;top:139.3px;width:488.8px;height:22.0px;background:#fff;border:1px solid #000;box-sizing:border-box;"></div>
<div class="t ft" style="top:141.39px;font-size:9px;line-height:12px;height:12px;color:#00008C;font-weight:bold;left:593px;">AIRFRAME VISUAL CHECKING</div>
<div class="t fa" style="top:162.03px;font-size:10px;line-height:13px;height:13px;color:#000;transform:scaleY(1.07);transform-origin:0 9.96px;left:799px;">Task Description:</div>
<div class="t fa" style="top:162.53px;font-size:10px;line-height:13px;height:13px;color:#F00;transform:scaleY(1.07);transform-origin:0 9.96px;left:892.5px;">*</div>
<div class="b " style="left:591.2px;top:177.2px;width:488.8px;height:38.8px;background:#fff;border:1px solid #000;box-sizing:border-box;"></div>
<div class="t ft" style="top:179.09px;font-size:9px;line-height:12px;height:12px;color:#00008C;font-weight:bold;left:593px;">AIRFRAME VISUAL CHECKING EVERY DAY BEFORE FIRST FLIGHT</div>
<div class="t fa" style="top:217.53px;font-size:10px;line-height:13px;height:13px;color:#000;transform:scaleY(1.07);transform-origin:0 9.96px;left:601.5px;">Task Type:</div>
<div class="t fa" style="top:218.03px;font-size:10px;line-height:13px;height:13px;color:#F00;transform:scaleY(1.07);transform-origin:0 9.96px;left:657.8px;">*</div>
<div class="t fa" style="top:217.53px;font-size:10px;line-height:13px;height:13px;color:#000;transform:scaleY(1.07);transform-origin:0 9.96px;left:732px;">Task Effectivity:</div>
<div class="t fa" style="top:218.03px;font-size:10px;line-height:13px;height:13px;color:#F00;transform:scaleY(1.07);transform-origin:0 9.96px;left:813.5px;">*</div>
<div class="t fa" style="top:217.53px;font-size:10px;line-height:13px;height:13px;color:#000;transform:scaleY(1.07);transform-origin:0 9.96px;left:883px;">MNHR:</div>
<div class="t fa" style="top:217.53px;font-size:10px;line-height:13px;height:13px;color:#000;transform:scaleY(1.07);transform-origin:0 9.96px;left:1007px;">JIC:</div>
<div class="b " style="left:591.3px;top:230.3px;width:68.2px;height:18.5px;background:#fff;box-sizing:border-box;border:1px solid;border-color:#848284 #fff #fff #848284;box-shadow:inset 1px 1px 0 #424142, inset -1px -1px 0 #D6D3CE;"></div>
<div class="b " style="left:645.5px;top:232.3px;width:12.0px;height:14.5px;background:#D6D3CE;box-sizing:border-box;border:1px solid;border-color:#fff #424142 #424142 #fff;box-shadow:inset -1px -1px 0 #848284;"></div>
<div class="b" style="left:648.5px;top:238.55px;width:0;height:0;border-left:3px solid transparent;border-right:3px solid transparent;border-top:3px solid #000"></div>
<div class="t ft" style="top:233.19px;font-size:9px;line-height:12px;height:12px;color:#00008C;font-weight:bold;left:593.5px;">INSP</div>
<div class="b " style="left:669px;top:230.3px;width:191.3px;height:18.5px;background:#fff;box-sizing:border-box;border:1px solid;border-color:#848284 #fff #fff #848284;box-shadow:inset 1px 1px 0 #424142, inset -1px -1px 0 #D6D3CE;"></div>
<div class="b " style="left:846.3px;top:232.3px;width:12.0px;height:14.5px;background:#D6D3CE;box-sizing:border-box;border:1px solid;border-color:#fff #424142 #424142 #fff;box-shadow:inset -1px -1px 0 #848284;"></div>
<div class="b" style="left:849.3px;top:238.55px;width:0;height:0;border-left:3px solid transparent;border-right:3px solid transparent;border-top:3px solid #000"></div>
<div class="t ft" style="top:233.19px;font-size:9px;line-height:12px;height:12px;color:#00008C;font-weight:bold;left:672px;">TEST OF THE EFFECTIVITY</div>
<div class="b " style="left:870.5px;top:230.3px;width:57.3px;height:18.7px;background:#fff;border:1px solid #000;box-sizing:border-box;"></div>
<div class="b " style="left:937px;top:230.3px;width:143px;height:19.5px;background:#fff;border:1px solid #000;box-sizing:border-box;"></div>
<div class="t fa" style="top:253.53px;font-size:10px;line-height:13px;height:13px;color:#000;transform:scaleY(1.07);transform-origin:0 9.96px;left:602px;">Main Zone:</div>
<div class="t fa" style="top:253.53px;font-size:10px;line-height:13px;height:13px;color:#000;transform:scaleY(1.07);transform-origin:0 9.96px;left:720px;">Additional Zones:</div>
<div class="t fa" style="top:253.73px;font-size:10px;line-height:13px;height:13px;color:#000;transform:scaleY(1.07);transform-origin:0 9.96px;left:874.5px;">MRB Code:</div>
<div class="t fa" style="top:249.93px;font-size:10px;line-height:13px;height:13px;color:#000;transform:scaleY(1.07);transform-origin:0 9.96px;left:948.4px;">NOTE:</div>
<div class="b " style="left:591.3px;top:266.3px;width:68.2px;height:18.3px;background:#fff;box-sizing:border-box;border:1px solid;border-color:#848284 #fff #fff #848284;box-shadow:inset 1px 1px 0 #424142, inset -1px -1px 0 #D6D3CE;"></div>
<div class="b " style="left:645.5px;top:268.3px;width:12.0px;height:14.3px;background:#D6D3CE;box-sizing:border-box;border:1px solid;border-color:#fff #424142 #424142 #fff;box-shadow:inset -1px -1px 0 #848284;"></div>
<div class="b" style="left:648.5px;top:274.45000000000005px;width:0;height:0;border-left:3px solid transparent;border-right:3px solid transparent;border-top:3px solid #000"></div>
<div class="t ft" style="top:269.09px;font-size:9px;line-height:12px;height:12px;color:#00008C;font-weight:bold;left:593.5px;">200</div>
<div class="b " style="left:669px;top:266px;width:191.5px;height:19px;background:#fff;border:1px solid #000;box-sizing:border-box;"></div>
<div class="t ft" style="top:269.09px;font-size:9px;line-height:12px;height:12px;color:#00008C;font-weight:bold;left:724.5px;width:80px;text-align:center;">240,230</div>
<div class="b " style="left:871px;top:266.5px;width:55.5px;height:17.9px;background:#C6FFFF;box-sizing:border-box;border:1px solid;border-color:#848284 #fff #fff #848284;box-shadow:inset 1px 1px 0 #424142, inset -1px -1px 0 #D6D3CE;"></div>
<div class="b " style="left:912.5px;top:268.5px;width:12.0px;height:13.9px;background:#D6D3CE;box-sizing:border-box;border:1px solid;border-color:#fff #424142 #424142 #fff;box-shadow:inset -1px -1px 0 #848284;"></div>
<div class="b" style="left:915.5px;top:274.45px;width:0;height:0;border-left:3px solid transparent;border-right:3px solid transparent;border-top:3px solid #000"></div>
<div class="b " style="left:937px;top:260.5px;width:143px;height:27.1px;background:#fff;border:1px solid #000;box-sizing:border-box;"></div>
<div class="b " style="left:591.3px;top:289.4px;width:471.7px;height:20.9px;background:#D6D3CE"></div>
<div class="b " style="left:591.3px;top:307.7px;width:471.7px;height:1.2px;background:#fff"></div>
<div class="b " style="left:591.3px;top:309.0px;width:471.7px;height:1.3px;background:#6B696B"></div>
<div class="b " style="left:591.3px;top:289.4px;width:59.3px;height:19.6px;background:#D6D3CE"></div>
<div class="b " style="left:591.3px;top:289.4px;width:59.3px;height:1.0px;background:#fff"></div>
<div class="b " style="left:591.3px;top:289.4px;width:1.0px;height:19.6px;background:#fff"></div>
<div class="b " style="left:649.3000000000001px;top:290.4px;width:1.3px;height:18.6px;background:#636163"></div>
<svg class="b" style="left:598.5px;top:291.2px" width="11" height="12" viewBox="0 0 11 13"><rect x="0.5" y="1.5" width="8.5" height="11" fill="#fff" stroke="#E7A218" stroke-width="1"/><rect x="3" y="0.3" width="4" height="2" fill="#424142"/><path d="M3 10l1-2.5 5-5 1.5 1.5-5 5z" fill="#F7CB4A" stroke="#9C6500" stroke-width="0.5"/></svg>
<div class="t ft" style="top:291.52px;font-size:8.9px;line-height:12px;height:12px;color:#000;left:615.6px;">Interval</div>
<div class="t ft" style="top:293.12px;font-size:8.9px;line-height:12px;height:12px;color:#000;left:653.5px;">Start Threshold</div>
<div class="t ft" style="top:293.12px;font-size:8.9px;line-height:12px;height:12px;color:#000;left:724.5px;">Finish Threshold</div>
<div class="t ft" style="top:293.12px;font-size:8.9px;line-height:12px;height:12px;color:#000;left:799px;">Tolerance</div>
<div class="t ft" style="top:293.12px;font-size:8.9px;line-height:12px;height:12px;color:#000;left:848px;">Instructions</div>
<div class="t ft" style="top:293.12px;font-size:8.9px;line-height:12px;height:12px;color:#000;left:903.5px;">Post Threshold</div>
<div class="t ft" style="top:293.12px;font-size:8.9px;line-height:12px;height:12px;color:#000;left:973px;">LUMP</div>
<div class="b " style="left:718.3px;top:292.5px;width:1.2px;height:14.5px;background:#6B696B"></div>
<div class="b " style="left:719.5px;top:292.5px;width:1.0px;height:14.5px;background:#fff"></div>
<div class="b " style="left:793.3px;top:292.5px;width:1.2px;height:14.5px;background:#6B696B"></div>
<div class="b " style="left:794.5px;top:292.5px;width:1.0px;height:14.5px;background:#fff"></div>
<div class="b " style="left:842.3px;top:292.5px;width:1.2px;height:14.5px;background:#6B696B"></div>
<div class="b " style="left:843.5px;top:292.5px;width:1.0px;height:14.5px;background:#fff"></div>
<div class="b " style="left:897.8px;top:292.5px;width:1.2px;height:14.5px;background:#6B696B"></div>
<div class="b " style="left:899px;top:292.5px;width:1px;height:14.5px;background:#fff"></div>
<div class="b " style="left:967.3px;top:292.5px;width:1.2px;height:14.5px;background:#6B696B"></div>
<div class="b " style="left:968.5px;top:292.5px;width:1.0px;height:14.5px;background:#fff"></div>
<div class="b " style="left:998.8px;top:292.5px;width:1.2px;height:14.5px;background:#6B696B"></div>
<div class="b " style="left:1000px;top:292.5px;width:1px;height:14.5px;background:#fff"></div>
<div class="b " style="left:652px;top:291.5px;width:66.5px;height:1.0px;background:#fff"></div>
<div class="b " style="left:720.5px;top:291.5px;width:73.0px;height:1.0px;background:#fff"></div>
<div class="b " style="left:795.5px;top:291.5px;width:47.0px;height:1.0px;background:#fff"></div>
<div class="b " style="left:844.5px;top:291.5px;width:53.5px;height:1.0px;background:#fff"></div>
<div class="b " style="left:900px;top:291.5px;width:67.5px;height:1.0px;background:#fff"></div>
<div class="b " style="left:969.5px;top:291.5px;width:29.5px;height:1.0px;background:#fff"></div>
<div class="b " style="left:591px;top:317px;width:489px;height:84px;box-sizing:border-box;border:1px solid #848284;box-shadow:inset 1px 1px 0 #fff;"></div>
<div class="b " style="left:596px;top:315px;width:75px;height:6px;background:#DEDFF7"></div>
<div class="t fa" style="top:310.97px;font-size:9.6px;line-height:13px;height:13px;color:#000;transform:scaleY(1.02);transform-origin:0 9.83px;font-weight:bold;left:598.5px;">Interval:</div>
<div class="b " style="left:637px;top:317px;width:20px;height:1px;background:#848284"></div>
<div class="b " style="left:637px;top:318px;width:20px;height:1px;background:#fff"></div>
<div class="t fa" style="top:311.54px;font-size:10px;line-height:13px;height:13px;color:#F00;transform:scaleY(1.07);transform-origin:0 9.96px;left:658.5px;">*</div>
<div class="t fa" style="top:331.94px;font-size:10px;line-height:13px;height:13px;color:#000;transform:scaleY(1.07);transform-origin:0 9.96px;left:634.7px;">FH:</div>
<div class="t fa" style="top:331.94px;font-size:10px;line-height:13px;height:13px;color:#000;transform:scaleY(1.07);transform-origin:0 9.96px;left:724px;">FC:</div>
<div class="t fa" style="top:319.04px;font-size:10px;line-height:13px;height:13px;color:#000;transform:scaleY(1.07);transform-origin:0 9.96px;left:791px;">DY:</div>
<div class="t fa" style="top:319.04px;font-size:10px;line-height:13px;height:13px;color:#000;transform:scaleY(1.07);transform-origin:0 9.96px;left:824px;">MO:</div>
<div class="t fa" style="top:319.04px;font-size:10px;line-height:13px;height:13px;color:#000;transform:scaleY(1.07);transform-origin:0 9.96px;left:858px;">YR:</div>
<div class="b " style="left:794.6px;top:333.4px;width:9.9px;height:9.9px;background:#fff;box-sizing:border-box;border:1px solid;border-color:#848284 #fff #fff #848284;box-shadow:inset 1px 1px 0 #5A595A, inset -1px -1px 0 #D6D3CE;"></div>
<div class="b " style="left:828px;top:333.4px;width:10px;height:9.9px;background:#fff;box-sizing:border-box;border:1px solid;border-color:#848284 #fff #fff #848284;box-shadow:inset 1px 1px 0 #5A595A, inset -1px -1px 0 #D6D3CE;"></div>
<svg class="b" style="left:828px;top:333.4px" width="10" height="9.900000000000034" viewBox="0 0 9 9"><path d="M2 4.2 L3.8 6.2 L7 2.4" stroke="#000" stroke-width="1.5" fill="none"/></svg>
<div class="b " style="left:861.2px;top:333.4px;width:9.8px;height:9.9px;background:#fff;box-sizing:border-box;border:1px solid;border-color:#848284 #fff #fff #848284;box-shadow:inset 1px 1px 0 #5A595A, inset -1px -1px 0 #D6D3CE;"></div>
<div class="b " style="left:603px;top:346.3px;width:79px;height:16.3px;background:#fff;border:1px solid #000;box-sizing:border-box;"></div>
<div class="t fa" style="top:348.04px;font-size:10px;line-height:13px;height:13px;color:#00008C;transform:scaleY(1.07);transform-origin:50% 9.96px;font-weight:bold;left:612.0px;width:60px;text-align:center;">1000</div>
<div class="b " style="left:692px;top:346.3px;width:79px;height:16.3px;background:#fff;border:1px solid #000;box-sizing:border-box;"></div>
<div class="t fa" style="top:348.04px;font-size:10px;line-height:13px;height:13px;color:#00008C;transform:scaleY(1.07);transform-origin:50% 9.96px;font-weight:bold;left:701.5px;width:60px;text-align:center;">500</div>
<div class="b " style="left:792.7px;top:346.3px;width:79.3px;height:16.3px;background:#fff;border:1px solid #000;box-sizing:border-box;"></div>
<div class="t fa" style="top:348.04px;font-size:10px;line-height:13px;height:13px;color:#00008C;transform:scaleY(1.07);transform-origin:50% 9.96px;font-weight:bold;left:802.0px;width:60px;text-align:center;">3</div>
<div class="b " style="left:893.2px;top:324.6px;width:9.8px;height:9.9px;background:#fff;box-sizing:border-box;border:1px solid;border-color:#848284 #fff #fff #848284;box-shadow:inset 1px 1px 0 #5A595A, inset -1px -1px 0 #D6D3CE;"></div>
<div class="t fa" style="top:323.04px;font-size:10px;line-height:13px;height:13px;color:#000;transform:scaleY(1.07);transform-origin:0 9.96px;left:907px;">:Whichever Comes Last</div>
<div class="b " style="left:893.2px;top:342.5px;width:9.8px;height:9.7px;background:#fff;box-sizing:border-box;border:1px solid;border-color:#848284 #fff #fff #848284;box-shadow:inset 1px 1px 0 #5A595A, inset -1px -1px 0 #D6D3CE;"></div>
<div class="t fa" style="top:341.04px;font-size:10px;line-height:13px;height:13px;color:#000;transform:scaleY(1.07);transform-origin:0 9.96px;left:907px;">:Completed By Component Replm.</div>
<div class="t fa" style="top:356.04px;font-size:10px;line-height:13px;height:13px;color:#000;transform:scaleY(1.07);transform-origin:0 9.96px;left:958.5px;">Reference:</div>
<div class="b " style="left:882px;top:368.5px;width:198px;height:23.5px;background:#fff;border:1px solid #000;box-sizing:border-box;"></div>
<div class="b " style="left:603.2px;top:368.8px;width:9.8px;height:9.8px;background:#fff;box-sizing:border-box;border:1px solid;border-color:#848284 #fff #fff #848284;box-shadow:inset 1px 1px 0 #5A595A, inset -1px -1px 0 #D6D3CE;"></div>
<div class="t fa" style="top:366.74px;font-size:10px;line-height:13px;height:13px;color:#000;transform:scaleY(1.07);transform-origin:0 9.96px;left:617px;">:APU Data</div>
<div class="t fa" style="top:364.04px;font-size:10px;line-height:13px;height:13px;color:#000;transform:scaleY(1.07);transform-origin:0 9.96px;left:731px;">DOC. Reference Data:</div>
<div class="b " style="left:692px;top:377.2px;width:180px;height:17.4px;background:#fff;border:1px solid #000;box-sizing:border-box;"></div>
<div class="b " style="left:591.3px;top:403.5px;width:471.7px;height:19.7px;background:#D6D3CE"></div>
<div class="b " style="left:591.3px;top:420.59999999999997px;width:471.7px;height:1.2px;background:#fff"></div>
<div class="b " style="left:591.3px;top:421.9px;width:471.7px;height:1.3px;background:#6B696B"></div>
<svg class="b" style="left:599.4px;top:408px" width="9.5" height="8.5" viewBox="0 0 9.5 8.5"><path d="M0.500 0.800C2.500 0.300 4 1 4.800 2.500 5.500 1 7 0.300 9 0.800 8.500 3 7 4 5 4L6 8 4.200 4.200C2.500 4.200 1 3 0.500 0.800z" fill="#08D708" stroke="#000" stroke-width="0.9"/></svg>
<div class="t ft" style="top:406.62px;font-size:8.9px;line-height:12px;height:12px;color:#000;left:615.6px;">Doc. Ref</div>
<svg class="b" style="left:662px;top:408px" width="9.5" height="8.5" viewBox="0 0 9.5 8.5"><path d="M0.500 0.800C2.500 0.300 4 1 4.800 2.500 5.500 1 7 0.300 9 0.800 8.500 3 7 4 5 4L6 8 4.200 4.200C2.500 4.200 1 3 0.500 0.800z" fill="#08D708" stroke="#000" stroke-width="0.9"/></svg>
<div class="t ft" style="top:406.62px;font-size:8.9px;line-height:12px;height:12px;color:#000;left:677.5px;">Special Insp.</div>
<svg class="b" style="left:738.5px;top:408px" width="9.5" height="8.5" viewBox="0 0 9.5 8.5"><path d="M0.500 0.800C2.500 0.300 4 1 4.800 2.500 5.500 1 7 0.300 9 0.800 8.500 3 7 4 5 4L6 8 4.200 4.200C2.500 4.200 1 3 0.500 0.800z" fill="#08D708" stroke="#000" stroke-width="0.9"/></svg>
<div class="t ft" style="top:406.62px;font-size:8.9px;line-height:12px;height:12px;color:#000;left:755px;">Panels</div>
<svg class="b" style="left:794px;top:408px" width="9.5" height="8.5" viewBox="0 0 9.5 8.5"><path d="M0.500 0.800C2.500 0.300 4 1 4.800 2.500 5.500 1 7 0.300 9 0.800 8.500 3 7 4 5 4L6 8 4.200 4.200C2.500 4.200 1 3 0.500 0.800z" fill="#08D708" stroke="#000" stroke-width="0.9"/></svg>
<div class="t ft" style="top:406.62px;font-size:8.9px;line-height:12px;height:12px;color:#000;left:810px;">Materials</div>
<div class="t ft" style="top:406.62px;font-size:8.9px;line-height:12px;height:12px;color:#000;left:903.5px;">JIC Procedure</div>
<div class="t ft" style="top:406.62px;font-size:8.9px;line-height:12px;height:12px;color:#000;left:968.5px;">Control</div>
<div class="b " style="left:653.3px;top:406.5px;width:1.2px;height:13.5px;background:#6B696B"></div>
<div class="b " style="left:654.5px;top:406.5px;width:1.0px;height:13.5px;background:#fff"></div>
<div class="b " style="left:730.8px;top:406.5px;width:1.2px;height:13.5px;background:#6B696B"></div>
<div class="b " style="left:732px;top:406.5px;width:1px;height:13.5px;background:#fff"></div>
<div class="b " style="left:785.8px;top:406.5px;width:1.2px;height:13.5px;background:#6B696B"></div>
<div class="b " style="left:787px;top:406.5px;width:1px;height:13.5px;background:#fff"></div>
<div class="b " style="left:962.3px;top:406.5px;width:1.2px;height:13.5px;background:#6B696B"></div>
<div class="b " style="left:963.5px;top:406.5px;width:1.0px;height:13.5px;background:#fff"></div>
<div class="b " style="left:999.8px;top:406.5px;width:1.2px;height:13.5px;background:#6B696B"></div>
<div class="b " style="left:1001px;top:406.5px;width:1px;height:13.5px;background:#fff"></div>
<div class="b " style="left:593px;top:405.5px;width:60.5px;height:1.0px;background:#fff"></div>
<div class="b " style="left:655.5px;top:405.5px;width:75.5px;height:1.0px;background:#fff"></div>
<div class="b " style="left:733px;top:405.5px;width:53px;height:1.0px;background:#fff"></div>
<div class="b " style="left:788px;top:405.5px;width:61px;height:1.0px;background:#fff"></div>
<div class="b " style="left:902px;top:405.5px;width:60.5px;height:1.0px;background:#fff"></div>
<div class="b " style="left:964.5px;top:405.5px;width:35.5px;height:1.0px;background:#fff"></div>
<div class="b " style="left:593px;top:405.5px;width:1px;height:15.0px;background:#fff"></div>
<div class="b " style="left:849.7px;top:403.5px;width:50.6px;height:18.4px;background:#D6D3CE"></div>
<div class="b " style="left:849.7px;top:403.5px;width:50.6px;height:1.0px;background:#fff"></div>
<div class="b " style="left:849.7px;top:403.5px;width:1.0px;height:18.4px;background:#fff"></div>
<div class="b " style="left:899.0px;top:404.5px;width:1.3px;height:17.4px;background:#636163"></div>
<svg class="b" style="left:855.6px;top:405px" width="11" height="12" viewBox="0 0 11 13"><rect x="0.5" y="1.5" width="8.5" height="11" fill="#fff" stroke="#E7A218" stroke-width="1"/><rect x="3" y="0.3" width="4" height="2" fill="#424142"/><path d="M3 10l1-2.5 5-5 1.5 1.5-5 5z" fill="#F7CB4A" stroke="#9C6500" stroke-width="0.5"/></svg>
<div class="t ft" style="top:405.32px;font-size:8.9px;line-height:12px;height:12px;color:#000;left:873px;">Tools</div>
<div class="b " style="left:1037.8px;top:404.8px;width:42.2px;height:15.0px;background:#FFFFC6;box-sizing:border-box;border:1px solid;border-color:#fff #424142 #424142 #fff;box-shadow:inset -1px -1px 0 #848284;"></div>
<div class="t fa" style="top:405.04px;font-size:10px;line-height:13px;height:13px;color:#000;transform:scaleY(1.07);transform-origin:0 9.96px;left:1052px;">Att</div>
<div class="b " style="left:591px;top:429.4px;width:489px;height:191.6px;box-sizing:border-box;border:1px solid #848284;border-bottom:none;box-shadow:inset 1px 1px 0 #fff;"></div>
<div class="b " style="left:596px;top:428px;width:132px;height:6px;background:#DEDFF7"></div>
<div class="t fa" style="top:422.97px;font-size:9.6px;line-height:13px;height:13px;color:#000;transform:scaleY(1.02);transform-origin:0 9.83px;font-weight:bold;left:598.7px;">Tools and Equipment Editor:</div>
<div class="b " style="left:603px;top:441.5px;width:90.5px;height:16.5px;background:#fff;border:1px solid #000;box-sizing:border-box;"></div>
<div class="t fa" style="top:442.54px;font-size:10px;line-height:13px;height:13px;color:#000;transform:scaleY(1.07);transform-origin:50% 9.96px;font-weight:bold;left:627.5px;width:40px;text-align:center;">22</div>
<div class="b " style="left:702.7px;top:441.5px;width:90.8px;height:16.5px;background:#fff;border:1px solid #000;box-sizing:border-box;"></div>
<div class="b " style="left:803.5px;top:439.4px;width:45.3px;height:17.9px;background:#C6C7FF;box-sizing:border-box;border:1px solid;border-color:#fff #424142 #424142 #fff;box-shadow:inset -1px -1px 0 #848284;"></div>
<div class="t fa" style="top:441.54px;font-size:10px;line-height:13px;height:13px;color:#000;transform:scaleY(1.07);transform-origin:50% 9.96px;left:805.7px;width:40px;text-align:center;">Save</div>
<div class="b " style="left:859px;top:439.4px;width:45.8px;height:17.9px;background:#C6C7FF;box-sizing:border-box;border:1px solid;border-color:#fff #424142 #424142 #fff;box-shadow:inset -1px -1px 0 #848284;"></div>
<div class="t fa" style="top:441.54px;font-size:10px;line-height:13px;height:13px;color:#A5A6C6;transform:scaleY(1.07);transform-origin:50% 9.96px;left:861.7px;width:40px;text-align:center;">Update</div>
<div class="b " style="left:603px;top:458.6px;width:302.8px;height:160.9px;background:#fff;border:1px solid #000;box-sizing:border-box;"></div>
<div class="t fa" style="top:459.54px;font-size:10px;line-height:13px;height:13px;color:#000;transform:scaleY(1.07);transform-origin:0 9.96px;left:606px;">4500-2231-005</div>
<div class="t fa" style="top:459.54px;font-size:10px;line-height:13px;height:13px;color:#000;transform:scaleY(1.07);transform-origin:0 9.96px;letter-spacing:-0.2px;left:707.4px;">CONVERSION TOOL</div>
<div class="t fa" style="top:459.54px;font-size:10px;line-height:13px;height:13px;color:#000;transform:scaleY(1.07);transform-origin:0 9.96px;left:822px;">51</div>
<svg class="b" style="left:700px;top:455px" width="160" height="110" viewBox="700 455 160 110"><path d="M709.3 466.2L839.2 524.5 820.6 555z" fill="#0D96F8"/><circle cx="831.8" cy="540.9" r="18.4" fill="#2B2B2B"/><circle cx="831.8" cy="540.9" r="17.3" fill="#fff"/><circle cx="831.8" cy="540.9" r="16.2" fill="#0D96F8"/><text x="831.8" y="546" text-anchor="middle" font-family="DejaVu Sans, Liberation Sans, sans-serif" font-weight="bold" font-size="11.8" fill="#fff">14</text></svg>
<div class="t fa" style="top:432.04px;font-size:10px;line-height:13px;height:13px;color:#000;transform:scaleY(1.07);transform-origin:0 9.96px;left:958.7px;">OEM Part Number:</div>
<div class="t fa" style="top:432.44px;font-size:10px;line-height:13px;height:13px;color:#F00;transform:scaleY(1.07);transform-origin:0 9.96px;left:1060px;">*</div>
<div class="b " style="left:915.6px;top:444px;width:164.4px;height:16px;background:#fff;border:1px solid #000;box-sizing:border-box;"></div>
<div class="t fa" style="top:459.54px;font-size:10px;line-height:13px;height:13px;color:#000;transform:scaleY(1.07);transform-origin:0 9.96px;left:950.7px;">Supplier Part Number:</div>
<div class="b " style="left:915.6px;top:470.8px;width:164.4px;height:16.2px;background:#fff;border:1px solid #000;box-sizing:border-box;"></div>
<div class="t fa" style="top:486.74px;font-size:10px;line-height:13px;height:13px;color:#000;transform:scaleY(1.07);transform-origin:0 9.96px;left:950.7px;">Optional Part Number:</div>
<div class="b " style="left:915.6px;top:498px;width:164.4px;height:16.3px;background:#fff;border:1px solid #000;box-sizing:border-box;"></div>
<div class="t fa" style="top:512.63px;font-size:10px;line-height:13px;height:13px;color:#000;transform:scaleY(1.07);transform-origin:0 9.96px;left:973.6px;">Description:</div>
<div class="t fa" style="top:513.53px;font-size:10px;line-height:13px;height:13px;color:#F00;transform:scaleY(1.07);transform-origin:0 9.96px;left:1038.2px;">*</div>
<div class="b " style="left:915.6px;top:524.1px;width:164.4px;height:18.7px;background:#fff;border:1px solid #000;box-sizing:border-box;"></div>
<div class="t fa" style="top:541.53px;font-size:10px;line-height:13px;height:13px;color:#000;transform:scaleY(1.07);transform-origin:0 9.96px;left:926.5px;">Remarks:</div>
<div class="b " style="left:915.6px;top:553.3px;width:164.4px;height:21.7px;background:#fff;border:1px solid #000;box-sizing:border-box;"></div>
<div class="b " style="left:960px;top:578px;width:56.8px;height:36px;background:#C6C7FF;box-sizing:border-box;border:1px solid;border-color:#fff #424142 #424142 #fff;box-shadow:inset -1px -1px 0 #848284;"></div>
<div class="t fa" style="top:598.03px;font-size:10px;line-height:13px;height:13px;color:#9C9EBD;transform:scaleY(1.07);transform-origin:50% 9.96px;left:967.5px;width:40px;text-align:center;">Add</div>
<div class="b " style="left:975.8px;top:579px;width:25.9px;height:22px;background:#D6D3CE"></div>
<svg class="b" style="left:978px;top:579px" width="20" height="20" viewBox="0 0 20 20"><path d="M11 0v9.500H1M11 9.500h8.500M8.500 10v9" stroke="#A5A3A5" stroke-width="3.200" fill="none"/><path d="M11 0v9.500H1M11 9.500h8.500M8.500 10v9" stroke="#F7F7F7" stroke-width="1.300" fill="none"/></svg>
<div class="b " style="left:1027.3px;top:578px;width:62.7px;height:36px;background:#C6C7FF;box-sizing:border-box;border:1px solid;border-color:#fff #424142 #424142 #fff;box-shadow:inset -1px -1px 0 #848284;"></div>
<div class="t fa" style="top:598.03px;font-size:10px;line-height:13px;height:13px;color:#222;transform:scaleY(1.07);transform-origin:0 9.96px;left:1042px;">Close</div>
<div class="b " style="left:1049.4px;top:582.2px;width:13.6px;height:12.8px;background:#C6C3C6"></div>
<svg class="b" style="left:1050px;top:582px" width="13" height="13.500" viewBox="0 0 13 13"><path d="M1 1h6v9h-6z" fill="#fff" stroke="#000" stroke-width="1"/><path d="M1 1l3.500 2v9.500l-3.500-2.500z" fill="#8C8A00" stroke="#000" stroke-width="0.800"/><path d="M7 10.500c2 1.500 4 1 5-0.500l-1.500-1.500v1c-1 .8-2 .8-3.500 0z" fill="#0000C6"/></svg>
</div></body></html>
